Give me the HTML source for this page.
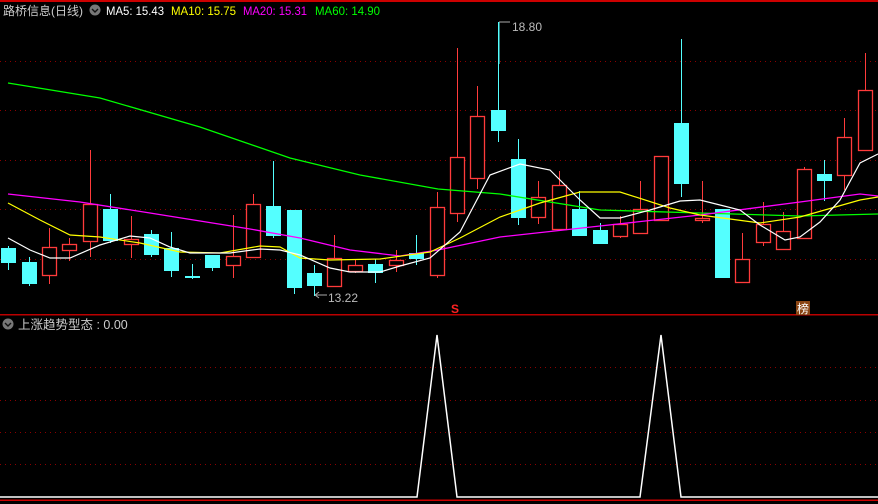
<!DOCTYPE html><html><head><meta charset="utf-8"><style>
body{margin:0;background:#000;width:878px;height:504px;overflow:hidden;font-family:"Liberation Sans","Noto Sans CJK SC",sans-serif}
</style></head><body>
<svg width="878" height="504" style="position:absolute;left:0;top:0" font-family="Liberation Sans, Noto Sans CJK SC, sans-serif">
<rect x="0" y="0" width="878" height="2" fill="#c00"/>
<g stroke="#8b0000" stroke-dasharray="1,4" stroke-width="1">
<line x1="0" y1="61.5" x2="878" y2="61.5"/><line x1="0" y1="110.5" x2="878" y2="110.5"/><line x1="0" y1="160.5" x2="878" y2="160.5"/><line x1="0" y1="209.5" x2="878" y2="209.5"/><line x1="0" y1="259.5" x2="878" y2="259.5"/>
<line x1="0" y1="367.5" x2="878" y2="367.5"/><line x1="0" y1="400.5" x2="878" y2="400.5"/><line x1="0" y1="432.5" x2="878" y2="432.5"/><line x1="0" y1="464.5" x2="878" y2="464.5"/>
</g>
<rect x="0" y="314" width="878" height="1.5" fill="#b00"/>
<rect x="0" y="499.5" width="878" height="1.5" fill="#c00"/>
<text x="3" y="15" font-size="12" fill="#ccc" textLength="80" lengthAdjust="spacingAndGlyphs">路桥信息(日线)</text>
<circle cx="95" cy="10" r="5.5" fill="#777"/><path d="M92 9 l3 3 l3 -3" stroke="#111" stroke-width="1.4" fill="none"/>
<text x="106" y="15" font-size="12" fill="#fff" textLength="58" lengthAdjust="spacingAndGlyphs">MA5: 15.43</text>
<text x="171" y="15" font-size="12" fill="#ff0" textLength="65" lengthAdjust="spacingAndGlyphs">MA10: 15.75</text>
<text x="243" y="15" font-size="12" fill="#f0f" textLength="64" lengthAdjust="spacingAndGlyphs">MA20: 15.31</text>
<text x="315" y="15" font-size="12" fill="#0f0" textLength="65" lengthAdjust="spacingAndGlyphs">MA60: 14.90</text>
<g id="c"></g>
<polyline fill="none" stroke="#0f0" stroke-width="1.3" points="8,83 100,98 200,127 290,158 360,175 438,189 500,194 600,210 700,213 800,216 878,214"/>
<polyline fill="none" stroke="#f0f" stroke-width="1.3" points="8,194 80,202 150,213 250,229 300,238 350,250 400,256 438,250 500,237 600,226 700,215 800,202 860,194 878,196"/>
<polyline fill="none" stroke="#ff0" stroke-width="1.2" points="8,203 40,220 70,235 100,237 140,243 180,252 220,253 260,246 280,247 300,258 330,260 380,259 430,252 460,238 500,217 540,203 580,192 620,192 670,208 700,215 760,223 800,217 860,200 878,197"/>
<polyline fill="none" stroke="#fff" stroke-width="1.2" points="8,238 30,250 50,258 70,258 100,245 130,236 150,238 170,247 190,253 230,253 260,249 280,250 300,255 330,268 350,272 380,272 400,266 430,258 460,232 490,175 520,164 550,170 580,200 600,218 620,218 650,210 680,201 700,200 720,205 740,210 760,225 785,240 800,237 820,222 840,200 860,163 878,154"/>
<path d="M499 22 V64" stroke="#5ff"/><path d="M499 22 l5 0 M504 22 h6" stroke="#aaa"/>
<text x="512" y="31" font-size="12" fill="#bbb">18.80</text>
<path d="M315 295 h12 M315 295 l4 -3 M315 295 l4 3" stroke="#aaa" fill="none"/>
<text x="328" y="302" font-size="12" fill="#bbb">13.22</text>
<text x="451" y="313" font-size="12" font-weight="bold" fill="#f22">S</text>
<rect x="796" y="301" width="14" height="14" fill="#8b4513"/><text x="797" y="313" font-size="12" fill="#fff">榜</text>
<circle cx="8" cy="324" r="5.5" fill="#777"/><path d="M5 323 l3 3 l3 -3" stroke="#111" stroke-width="1.4" fill="none"/>
<text x="18" y="329" font-size="12.5" fill="#ccc">上涨趋势型态 : 0.00</text>
<polyline fill="none" stroke="#fff" stroke-width="1.5" points="0,497 417,497 437,335 457,497 640,497 661,335 681,497 878,497"/>
</svg>
<script>
var d=[["c",1,248,263,246,270],["c",22,262,284,257,286],["r",42,247,275,228,284],["r",62,244,250,238,261],["r",83,204,241,150,257],["c",103,209,241,194,243],["r",124,239,244,216,258],["c",144,234,255,230,257],["c",164,248,271,232,277],["c",185,276,278,264,279],["c",205,255,268,255,271],["r",226,256,265,215,278],["r",246,204,257,194,257],["c",266,206,236,161,238],["c",287,210,288,210,294],["c",307,273,286,265,296],["r",327,258,286,235,286],["r",348,265,271,260,273],["c",368,264,273,259,283],["r",389,260,265,250,272],["c",409,253,259,235,265],["r",430,207,275,192,278],["r",450,157,213,48,222],["r",470,116,178,86,189],["c",491,110,131,22,142],["c",511,159,218,139,225],["r",531,197,217,181,224],["r",552,185,229,171,229],["c",572,209,236,191,236],["c",593,230,244,223,244],["r",613,224,236,216,238],["r",633,209,233,181,233],["r",654,156,220,156,220],["c",674,123,184,39,197],["r",695,218,220,181,223],["c",715,209,278,209,278],["r",735,259,282,233,282],["r",756,224,242,202,246],["r",776,231,249,212,249],["r",797,169,238,167,238],["c",817,174,181,160,201],["r",837,137,175,118,190],["r",858,90,150,53,150]];
var s="";d.forEach(function(a){var x=a[1],w=15,cx=x+7.5;var col=a[0]=="c"?"#54ffff":"#ff3b3b";
s+='<line x1="'+cx+'" y1="'+a[4]+'" x2="'+cx+'" y2="'+a[5]+'" stroke="'+col+'"/>';
if(a[0]=="c")s+='<rect x="'+x+'" y="'+a[2]+'" width="'+w+'" height="'+Math.max(2,a[3]-a[2])+'" fill="'+col+'"/>';
else s+='<rect x="'+(x+0.5)+'" y="'+(a[2]+0.5)+'" width="'+(w-1)+'" height="'+Math.max(1,a[3]-a[2])+'" fill="#000" stroke="'+col+'" stroke-width="1.3"/>';});
document.getElementById("c").innerHTML=s;
</script>
</body></html>
